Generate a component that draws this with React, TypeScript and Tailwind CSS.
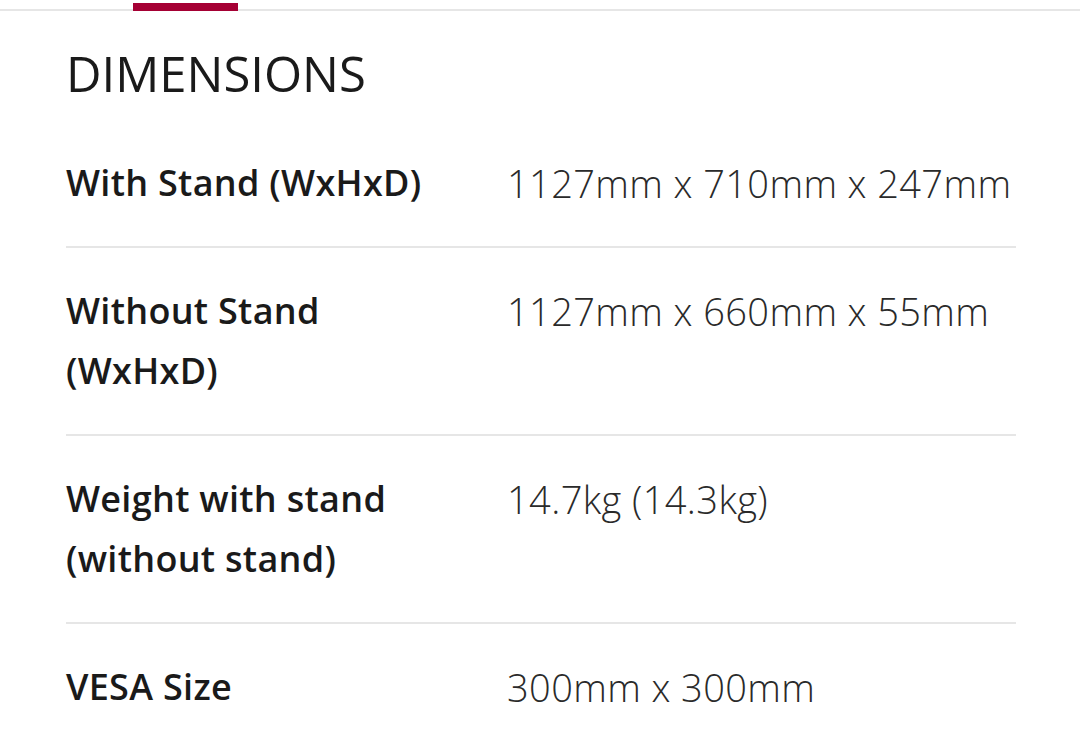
import React from 'react';

const specs = [
    { label: 'With Stand (WxHxD)', value: '1127mm x 710mm x 247mm' },
    { label: 'Without Stand (WxHxD)', value: '1127mm x 660mm x 55mm' },
    { label: 'Weight with stand (without stand)', value: '14.7kg (14.3kg)' },
    { label: 'VESA Size', value: '300mm x 300mm' },
];

const App = () => {
    return (
        <div className="w-[1080px] h-[736px] overflow-hidden bg-white font-['Open_Sans',sans-serif] text-[#1a1a1a]">
            {/* Tab bar */}
            <div className="relative h-[11px] border-b-2 border-[#e6e6e6]">
                <div className="absolute left-[133px] top-[3px] w-[105px] h-[8px] bg-[#a50034]" />
            </div>

            <div className="pl-[66px] pr-[64px]">
                {/* Header */}
                <h1 className="mt-[34px] text-[49px] leading-[56px] font-normal">DIMENSIONS</h1>

                {/* Spec rows */}
                <div className="mt-[19px]">
                    {specs.map((item, index) => (
                        <div
                            key={index}
                            className={`flex py-[33px] ${index < specs.length - 1 ? 'border-b-2 border-[#e6e6e6]' : ''}`}
                        >
                            <div className="w-[441px] pr-[50px] text-[36px] leading-[60px] font-semibold tracking-[0.3px]">{item.label}</div>
                            <div className="flex-1 text-[38px] leading-[60px] font-light tracking-[0.4px] text-[#2a2a2a]">{item.value}</div>
                        </div>
                    ))}
                </div>
            </div>
        </div>
    );
};

export default App;
